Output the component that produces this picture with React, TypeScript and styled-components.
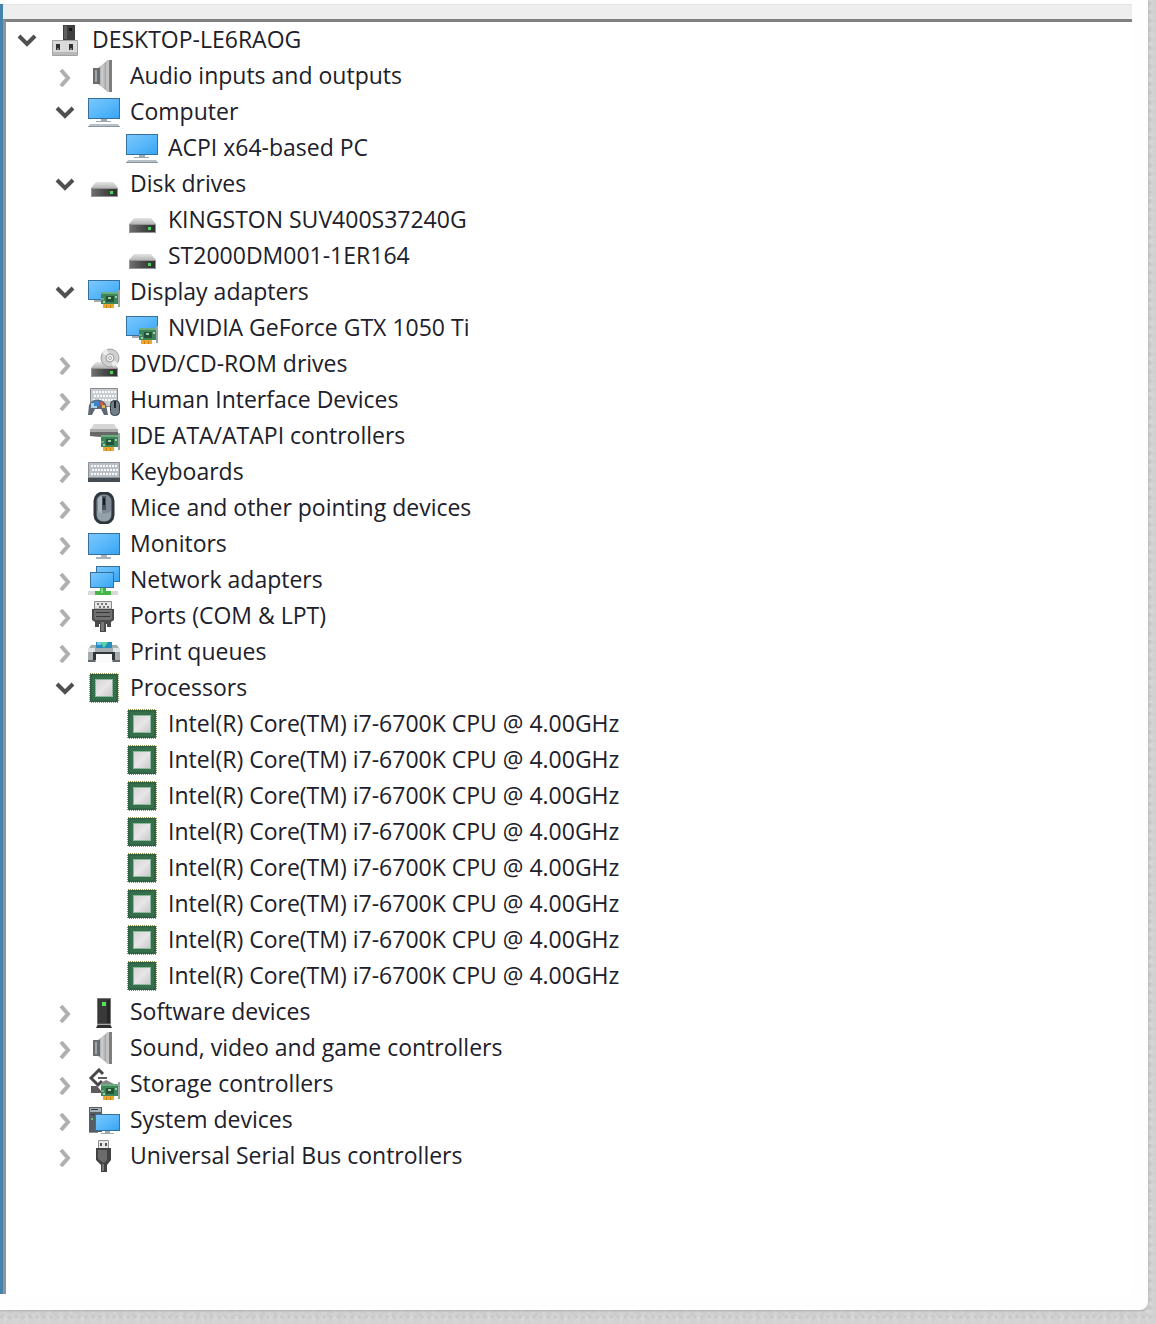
import React, { useState } from 'react';
import styled, { createGlobalStyle } from 'styled-components';

const GlobalStyle = createGlobalStyle`
  *, *::before, *::after { box-sizing: border-box; }
  body {
    margin: 0;
    background: #d2d2d2;
    font-family: 'Open Sans', 'Noto Sans', sans-serif;
    color: #20202a;
  }
`;

const Backdrop = styled.div`
  display: flex;
  min-height: 100vh;
  padding: 0 8px 14px 0;
  background-color: #d2d2d2;
  background-image:
    radial-gradient(circle at 2px 3px, #c9c9c9 1px, transparent 3px),
    radial-gradient(circle at 5px 2px, #dadada 1px, transparent 4px),
    radial-gradient(circle at 3px 6px, #cccccc 1px, transparent 3px);
  background-size: 7px 9px, 11px 7px, 13px 11px;
`;

const Card = styled.main`
  display: flex;
  flex: 1;
  min-width: 0;
  padding: 4px 16px 16px 0;
  background: #fefefe;
  border-bottom-right-radius: 8px;
  box-shadow: 0 1px 3px #a8a8a8;
`;

const WindowFrame = styled.section`
  display: flex;
  flex: 1;
  flex-direction: column;
  min-width: 0;
  border-left: 3px solid #4583ad;
`;

const ToolbarEdge = styled.div`
  height: 15px;
  background: #eeeeee;
  border-top: 1px solid #e2e2e2;
`;

const TreePane = styled.div`
  flex: 1;
  padding-left: 10px;
  border-top: 3px solid #808080;
  border-left: 3px solid #8f9498;
  background: #ffffff;
`;

const Branch = styled.ul<{ $nested?: boolean }>`
  margin: 0;
  padding: 0 0 0 ${({ $nested }) => ($nested ? 38 : 0)}px;
  list-style: none;
`;

const Row = styled.div`
  display: flex;
  align-items: center;
  gap: 10px;
  height: 36px;
`;

const Toggle = styled.button`
  display: grid;
  place-items: center;
  flex: none;
  width: 24px;
  height: 24px;
  padding: 0;
  border: 0;
  background: none;
  cursor: pointer;
`;

const ToggleSpace = styled.span`
  flex: none;
  width: 24px;
`;

const IconBox = styled.svg`
  display: block;
  flex: none;
  width: 32px;
  height: 32px;
`;

const Label = styled.span`
  padding-bottom: 2px;
  font-size: 23px;
  line-height: 34px;
  white-space: nowrap;
`;

type IconName =
  | 'host' | 'speaker' | 'computer' | 'disk' | 'display' | 'dvd' | 'hid' | 'ide'
  | 'keyboard' | 'mouse' | 'monitor' | 'network' | 'port' | 'printer' | 'cpu'
  | 'software' | 'storage' | 'system' | 'usb';

interface Device {
  name: string;
  icon: IconName;
  open?: boolean;
  children?: Device[];
}

const HiddenSvg = styled.svg`
  position: absolute;
  width: 0;
  height: 0;
`;

const Defs = () => (
  <HiddenSvg aria-hidden="true">
    <defs>
      <linearGradient id="screen" x1="0" y1="0" x2="1" y2="1">
        <stop offset="0" stopColor="#7cc8fb" />
        <stop offset="0.5" stopColor="#5ab8fa" />
        <stop offset="1" stopColor="#36a3f3" />
      </linearGradient>
      <linearGradient id="metal" x1="0" y1="0" x2="1" y2="0">
        <stop offset="0" stopColor="#8a8a8a" />
        <stop offset="0.4" stopColor="#d0d0d0" />
        <stop offset="1" stopColor="#8c8c8c" />
      </linearGradient>
      <linearGradient id="lid" x1="0" y1="0" x2="0" y2="1">
        <stop offset="0" stopColor="#e4e4e4" />
        <stop offset="1" stopColor="#b5b5b5" />
      </linearGradient>
      <linearGradient id="dark" x1="0" y1="0" x2="1" y2="0">
        <stop offset="0" stopColor="#707070" />
        <stop offset="0.5" stopColor="#4a4a4a" />
        <stop offset="1" stopColor="#303030" />
      </linearGradient>
      <linearGradient id="die" x1="0" y1="0" x2="1" y2="1">
        <stop offset="0" stopColor="#d4d6d5" />
        <stop offset="0.5" stopColor="#e9e5e8" />
        <stop offset="1" stopColor="#c9cbca" />
      </linearGradient>
    </defs>
  </HiddenSvg>
);

const Screen = ({ x, y, w, h }: { x: number; y: number; w: number; h: number }) => (
  <rect x={x + 0.5} y={y + 0.5} width={w - 1} height={h - 1} fill="url(#screen)" stroke="#35719b" />
);

const CircuitBoard = ({ y }: { y: number }) => (
  <g transform={`translate(0 ${y})`}>
    <path d="M30 -2h2v17h-2z" fill="#9aa6a2" />
    <path d="M13 0h17v12H13z" fill="#3d8558" />
    <path d="M13 0h17v2H13zM13 6h3v2h-3z" fill="#6cae80" />
    <path d="M18 4h8v6h-8z" fill="#235239" />
    <path d="M20 5h3v2h-3zM27 4h2v2h-2zM15 9h2v2h-2z" fill="#9fd0a4" />
    <path d="M15 12h11v4H15z" fill="#eda82f" />
    <path d="M18 13h1v3h-1zM22 13h1v3h-1z" fill="#c77e14" />
  </g>
);

const DriveFront = () => (
  <>
    <rect x="3" y="20" width="27" height="9" fill="#959595" />
    <rect x="4" y="21" width="25" height="7" fill="url(#dark)" />
    <rect x="22" y="23" width="3" height="3" fill="#49d45c" />
  </>
);

const Keys = ({ top, left, right, rows }: { top: number; left: number; right: number; rows: number }) => (
  <g stroke="#f7f9fa" strokeWidth="2" strokeDasharray="2 1">
    {Array.from({ length: rows }, (_, i) => (
      <path key={i} d={`M${left + (i % 2)} ${top + i * 4}H${right}`} />
    ))}
  </g>
);

const drawings: Record<IconName, React.ReactNode> = {
  host: (
    <>
      <path d="M13 1h12v15H13z" fill="#404040" />
      <path d="M14 2h3v13h-3z" fill="#606060" />
      <path d="M19 4h3v3h-3z" fill="#151515" />
      <path d="M2.5 16.500h25v15h-25z" fill="#dadada" stroke="#a2a2a2" />
      <path d="M3 28h24v3H3z" fill="#b9b9b9" />
      <path d="M6 20h4v6H6zM19 20h4v6h-4z" fill="#303030" />
      <path d="M7 24h2v2H7zM20 24h2v2h-2z" fill="#777" />
    </>
  ),
  speaker: (
    <>
      <path d="M10 8 20 0v32L10 24z" fill="url(#metal)" />
      <path d="M5 8h7v16H5z" fill="#666c70" />
      <path d="M7 10h2v12H7z" fill="#a0a6aa" />
      <path d="M18 1 22 0v32l-4-1z" fill="#c2c2c2" />
      <path d="M21 0h3v32h-3z" fill="#7e7e7e" />
    </>
  ),
  computer: (
    <>
      <Screen x={0} y={2} w={32} h={21} />
      <path d="M13 23h6v2h4v1H8v-1h5z" fill="#9aa9b4" />
      <path d="M2 28h28l2 3H0z" fill="#b8c0c7" />
      <path d="M0 30h32v1H0z" fill="#8d969e" />
    </>
  ),
  monitor: (
    <>
      <Screen x={0} y={5} w={32} h={22} />
      <path d="M13 27h6v2h4v2H8v-2h5z" fill="#aab3ba" />
    </>
  ),
  disk: (
    <>
      <path d="M8 14h17l5 6H3z" fill="url(#lid)" />
      <DriveFront />
    </>
  ),
  display: (
    <>
      <Screen x={0} y={4} w={32} h={20} />
      <path d="M6 24h9v2H6z" fill="#a4abb0" />
      <CircuitBoard y={16} />
    </>
  ),
  dvd: (
    <>
      <path d="M8 14h17l5 6H3z" fill="url(#lid)" />
      <circle cx="22" cy="10" r="9" fill="#d0d0d0" stroke="#a0a0a0" />
      <path d="M22 10 14 5a9 9 0 0 1 5-4zM22 10l8 5a9 9 0 0 1-5 4z" fill="#ededed" />
      <circle cx="22" cy="10" r="4" fill="#efefef" stroke="#999" />
      <circle cx="22" cy="10" r="1.500" fill="#fff" stroke="#aaa" />
      <DriveFront />
    </>
  ),
  hid: (
    <>
      <path d="M2.500 4.500h27v18h-27z" fill="#c9cdd0" stroke="#858b90" />
      <Keys top={8} left={5} right={28} rows={3} />
      <path d="M4 17q5-3 11 0l3 3 2 11h-4l-3-6H7l-3 6H0l1-10z" fill="#5d6873" />
      <path d="M3 19h6v5H3z" fill="#a8d3ee" />
      <path d="M6 17h5v5H6z" fill="#3b84cf" />
      <path d="M12 18h3v3h-3z" fill="#d65c48" />
      <path d="M14 21h3v3h-3z" fill="#e0b55a" />
      <rect x="22.500" y="16.500" width="9" height="15" rx="4" fill="#737f89" stroke="#333b42" />
      <path d="M27 17v7" stroke="#20262b" strokeWidth="2" />
    </>
  ),
  ide: (
    <>
      <path d="M6 4h20l4 6H2z" fill="#d6d6d6" />
      <path d="M2 10h28v6q-14 2-28 0z" fill="#686868" />
      <path d="M2 9h28v3H2z" fill="#a9a9a9" />
      <CircuitBoard y={15} />
    </>
  ),
  keyboard: (
    <>
      <path d="M.5 6.500h31v19H.5z" fill="#b9bfc5" stroke="#8b9299" />
      <Keys top={10} left={3} right={30} rows={3} />
      <path d="M0 22h32v4H0z" fill="#454c52" />
      <path d="M0 21h32v1H0z" fill="#8b9299" />
    </>
  ),
  mouse: (
    <>
      <rect x="7" y="1" width="18" height="30" rx="8" fill="#7d8a96" stroke="#30363c" strokeWidth="3" />
      <path d="M10 8q1-4 4-4v18q-4 0-4-4z" fill="#aab7c1" />
      <path d="M9 19q7 5 14 0v4q0 6-7 6t-7-6z" fill="#93a1ac" />
      <path d="M14 4h4v14h-4z" fill="#4a535b" />
      <path d="M15 6h2v7h-2z" fill="#171c20" />
    </>
  ),
  network: (
    <>
      <Screen x={8} y={2} w={24} h={16} />
      <path d="M0 27h30v4H0z" fill="#d5dad5" />
      <path d="M12 23h6v4h5v4H7v-4h5z" fill="#45b549" />
      <path d="M13 24h2v5h-2z" fill="#8cda83" />
      <Screen x={2} y={8} w={24} h={16} />
    </>
  ),
  port: (
    <>
      <path d="M6.500 1.500h17V9h-17z" fill="#e5e5e5" stroke="#8a8a8a" />
      <path d="M9 3h2v2H9zM13 3h2v2h-2zM17 3h2v2h-2zM11 6h2v2h-2zM15 6h2v2h-2zM19 6h2v2h-2z" fill="#777" />
      <path d="M4 9h22v11l-3 2v5h-4v-3h-1v8h-6v-8h-1v3H7v-5l-3-2z" fill="#4a4a4a" />
      <path d="M6 10h18v9l-2 1H8l-2-1z" fill="#707070" />
      <path d="M8 12h14v1H8zM8 16h14v1H8z" fill="#383838" />
      <path d="M13 22h3v9h-3z" fill="#777" />
    </>
  ),
  printer: (
    <>
      <path d="M8 6h16v7H8z" fill="#278dbf" />
      <path d="M12 6h8l-4 6z" fill="#55d5a0" />
      <path d="M9 6h4v3H9z" fill="#75c7ef" />
      <path d="M3 9h5v3h16V9h5l3 5v12H0V14z" fill="#a5adb1" />
      <path d="M0 12h7v4H0zM25 12h7v4h-7z" fill="#e0e4e6" />
      <path d="M5 16h22v8H5z" fill="#30363a" />
      <path d="M8 18h16v9H8z" fill="#fafafa" />
      <path d="M0 24h7v2H0zM25 24h7v2h-7z" fill="#626a6f" />
    </>
  ),
  cpu: (
    <>
      <rect x="2" y="2" width="28" height="28" fill="none" stroke="#8f8e4c" strokeWidth="2" strokeDasharray="1 1" />
      <path d="M2 2h28v28H2z" fill="#2f6546" />
      <path d="M4 4h24v24H4z" fill="#356f4c" />
      <path d="M7 7h18v18H7z" fill="#8db89b" />
      <path d="M8 8h16v16H8z" fill="url(#die)" />
    </>
  ),
  software: (
    <>
      <path d="M9.500 2.500h13V28h-13z" fill="#393939" stroke="#747474" />
      <path d="M19 4h3v23h-3z" fill="#272727" />
      <path d="M14 6h4v4h-4z" fill="#55e451" />
      <path d="M10 28h12l2 4H8z" fill="#303030" />
      <path d="M10 28h12v1H10z" fill="#aaa" />
    </>
  ),
  storage: (
    <>
      <path d="m15 6-4-4-8 8 7 7 4-4" fill="none" stroke="#484848" strokeWidth="3" />
      <path d="M10 10h9" fill="none" stroke="#606060" strokeWidth="2" />
      <path d="M3 18h6l6 7H3z" fill="#5c5c5c" />
      <path d="m13 15 5-3 8 4-7 4z" fill="#858585" />
      <CircuitBoard y={16} />
    </>
  ),
  system: (
    <>
      <path d="M1 3h13v25H1z" fill="#555e63" />
      <path d="M2 4h11v4H2z" fill="#a7b0b5" />
      <path d="M3 5h7v1H3zM3 10h5v1H3z" fill="#343b3f" />
      <path d="M3 14h2v2H3z" fill="#50ca70" />
      <path d="M1 28h9v1H1z" fill="#8a9195" />
      <Screen x={7} y={10} w={25} h={17} />
      <path d="M17 27h5v2h4v1H13v-1h4z" fill="#9aa9b4" />
    </>
  ),
  usb: (
    <>
      <path d="M10.500.5h10V9h-10z" fill="#e8e8e8" stroke="#929292" />
      <path d="M12 3h2v3h-2zM17 3h2v3h-2z" fill="#555" />
      <path d="M8 8h15v12l-4 5v7h-6v-7l-5-5z" fill="#424242" />
      <path d="M10 10h9v10l-3 3-6-4z" fill="#6b6b6b" />
      <path d="M14 24h2v7h-2z" fill="#777" />
    </>
  ),
};

const Chevron = ({ open }: { open: boolean }) => (
  <svg width="24" height="24" viewBox="0 0 24 24" fill="none" strokeWidth="4" aria-hidden="true">
    {open ? <path d="m3 8 8 8 8-8" stroke="#505050" /> : <path d="m7 6 7 8-7 8" stroke="#b0b0b0" />}
  </svg>
);

const cores: Device[] = Array.from({ length: 8 }, () => ({
  name: 'Intel(R) Core(TM) i7-6700K CPU @ 4.00GHz',
  icon: 'cpu',
}));

const categories: Device[] = [
  { name: 'Audio inputs and outputs', icon: 'speaker', children: [] },
  { name: 'Computer', icon: 'computer', open: true, children: [{ name: 'ACPI x64-based PC', icon: 'computer' }] },
  {
    name: 'Disk drives',
    icon: 'disk',
    open: true,
    children: [
      { name: 'KINGSTON SUV400S37240G', icon: 'disk' },
      { name: 'ST2000DM001-1ER164', icon: 'disk' },
    ],
  },
  {
    name: 'Display adapters',
    icon: 'display',
    open: true,
    children: [{ name: 'NVIDIA GeForce GTX 1050 Ti', icon: 'display' }],
  },
  { name: 'DVD/CD-ROM drives', icon: 'dvd', children: [] },
  { name: 'Human Interface Devices', icon: 'hid', children: [] },
  { name: 'IDE ATA/ATAPI controllers', icon: 'ide', children: [] },
  { name: 'Keyboards', icon: 'keyboard', children: [] },
  { name: 'Mice and other pointing devices', icon: 'mouse', children: [] },
  { name: 'Monitors', icon: 'monitor', children: [] },
  { name: 'Network adapters', icon: 'network', children: [] },
  { name: 'Ports (COM & LPT)', icon: 'port', children: [] },
  { name: 'Print queues', icon: 'printer', children: [] },
  { name: 'Processors', icon: 'cpu', open: true, children: cores },
  { name: 'Software devices', icon: 'software', children: [] },
  { name: 'Sound, video and game controllers', icon: 'speaker', children: [] },
  { name: 'Storage controllers', icon: 'storage', children: [] },
  { name: 'System devices', icon: 'system', children: [] },
  { name: 'Universal Serial Bus controllers', icon: 'usb', children: [] },
];

const root: Device = { name: 'DESKTOP-LE6RAOG', icon: 'host', open: true, children: categories };

const TreeNode = ({ device }: { device: Device }) => {
  const [open, setOpen] = useState(Boolean(device.open));
  return (
    <li>
      <Row>
        {device.children ? (
          <Toggle type="button" aria-expanded={open} aria-label={device.name} onClick={() => setOpen(!open)}>
            <Chevron open={open} />
          </Toggle>
        ) : (
          <ToggleSpace />
        )}
        <IconBox viewBox="0 0 32 32" aria-hidden="true">{drawings[device.icon]}</IconBox>
        <Label>{device.name}</Label>
      </Row>
      {open && device.children && device.children.length > 0 && (
        <Branch $nested>
          {device.children.map((child, i) => (
            <TreeNode key={i} device={child} />
          ))}
        </Branch>
      )}
    </li>
  );
};

export default function App() {
  return (
    <Backdrop>
      <GlobalStyle />
      <Defs />
      <Card>
        <WindowFrame>
          <ToolbarEdge />
          <TreePane>
            <Branch>
              <TreeNode device={root} />
            </Branch>
          </TreePane>
        </WindowFrame>
      </Card>
    </Backdrop>
  );
}
